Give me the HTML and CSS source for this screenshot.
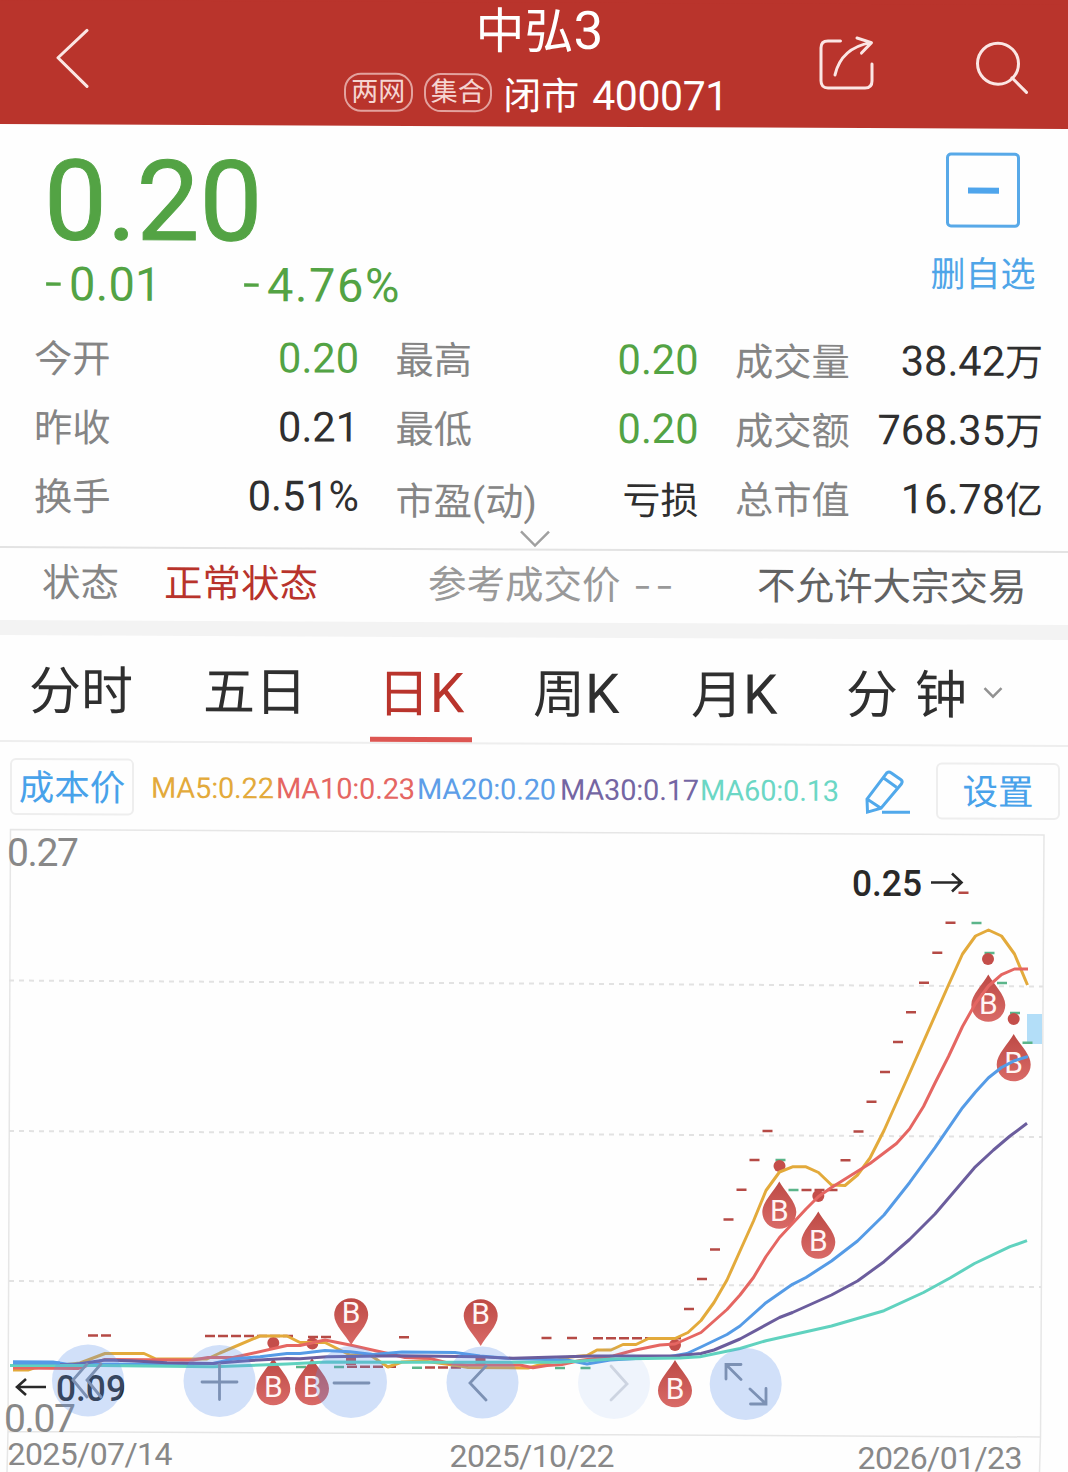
FILE: index.html
```html
<!DOCTYPE html>
<html lang="zh-CN">
<head>
<meta charset="utf-8">
<title>中弘3 400071</title>
<link rel="stylesheet" href="styles.css">
</head>
<body>
<div class="panel">
  <header class="header">
    <svg class="icon-back" width="34" height="62" viewBox="55 28 34 62"><path d="M87 31 58 58.500 87 87"/></svg>
    <div class="heading">
      <h1 class="title">中弘<span class="num">3</span></h1>
      <div class="subtitle"><span class="badge">两网</span><span class="badge">集合</span><span class="market">闭市</span><span class="code">400071</span></div>
    </div>
    <svg class="icon-share" width="60" height="60" viewBox="816 34 60 60"><path d="M840.500 41H828Q821 41 821 48V81Q821 88 828 88H865Q872 88 872 81V64M835 75Q841 48 871 42.500M857 38 871.500 42.500 861.500 53"/></svg>
    <svg class="icon-search" width="60" height="60" viewBox="972 34 60 60"><circle cx="998" cy="61" r="20.500"/><path d="m1012 75 14.500 14.500"/></svg>
  </header>

  <section class="quote">
    <div class="prices">
      <div class="price">0.20</div>
      <div class="change"><span class="delta"><i>-</i>0.01</span><span class="percent"><i>-</i>4.76%</span></div>
    </div>
    <div class="watch">
      <div class="watch-box"><i></i></div>
      <span>删自选</span>
    </div>
  </section>

  <section class="stats">
    <dl><dt>今开</dt><dd class="down">0.20</dd></dl>
    <dl><dt>最高</dt><dd class="down">0.20</dd></dl>
    <dl><dt>成交量</dt><dd>38.42<em>万</em></dd></dl>
    <dl><dt>昨收</dt><dd>0.21</dd></dl>
    <dl><dt>最低</dt><dd class="down">0.20</dd></dl>
    <dl><dt>成交额</dt><dd>768.35<em>万</em></dd></dl>
    <dl><dt>换手</dt><dd>0.51%</dd></dl>
    <dl class="low"><dt>市盈<span class="num">(</span>动<span class="num">)</span></dt><dd><em>亏损</em></dd></dl>
    <dl><dt>总市值</dt><dd>16.78<em>亿</em></dd></dl>
  </section>
  <div class="more"><svg width="34" height="20" viewBox="0 0 34 20"><path d="M3 3 17 17 31 3"/></svg></div>

  <section class="status">
    <span class="s-label">状态</span><span class="s-value">正常状态</span><span class="s-ref">参考成交价</span><span class="s-dash">--</span><span class="s-block">不允许大宗交易</span>
  </section>

  <nav class="tabs">
    <span class="tab t1">分时</span><span class="tab t2">五日</span><span class="tab t3 active">日<b>K</b></span><span class="tab t4">周<b>K</b></span><span class="tab t5">月<b>K</b></span><span class="tab t6">分 钟</span>
    <svg class="tab-arrow" width="20" height="14" viewBox="0 0 20 14"><path d="m1.500 2.500 8.500 8.500 8.500-8.500"/></svg>
  </nav>

  <section class="legend">
    <span class="btn cost">成本价</span>
    <span class="ma m5">MA5:0.22</span><span class="ma m10">MA10:0.23</span><span class="ma m20">MA20:0.20</span><span class="ma m30">MA30:0.17</span><span class="ma m60">MA60:0.13</span>
    <svg class="icon-edit" width="48" height="48" viewBox="864 768 48 48"><path d="M867 799 887 772.500Q889 771 891 772.500L901 779.500Q903 781 901.500 783.500L881 808 867.500 812ZM867 799 881 808M884 778 896.500 787M882 812H910"/></svg>
    <span class="btn setup">设置</span>
  </section>
</div>

<svg class="chart" width="1068" height="650" viewBox="0 822 1068 650">
  <defs>
    <linearGradient id="drop" x1="0" y1="0" x2="0" y2="1"><stop offset="0" stop-color="#bd4a45"/><stop offset="1" stop-color="#d96a67"/></linearGradient>
    <g id="buy-up"><path d="M0 0C5 9.500 17 20 17 30.500A17 16.800 0 0 1-17 30.500C-17 20-5 9.500 0 0Z" fill="url(#drop)"/><text y="39" class="b">B</text></g>
    <g id="buy-down"><path d="M0 0C-5-9.500-17-20-17-30A17 16.800 0 0 1 17-30C17-20 5-9.500 0 0Z" fill="url(#drop)"/><text y="-22.500" class="b">B</text></g>
  </defs>

  <path class="frame" d="M7 1472 8 1431.500 10.500 829.500 1044 835 1040.500 1437 1039.500 1472M8 1431.500 1040.500 1437"/>
  <path class="grid" d="M9 980.500 1043 986.500M9 1131 1042 1137M9 1281 1041 1287"/>
  <rect x="1027" y="1014" width="15" height="30" fill="#b3def8"/>

  <path class="tick up" d="M88 1335.500h10m3 0h10M205 1336h10m3 0h10m3 0h10m3 0h10m3 0h10m3 0h10m3 0h10M308 1337h10m3 0h10M399 1337.300h10M541.500 1338h10M567 1338h10M593 1338.300h10m3 0h10m3 0h10m3 0h10m3 0h10m3 0h10m3 0h10M347 1366.700h10m3 0h10m3 0h10m3 0h10M425 1367.500h10m3 0h10m3 0h10M684 1309h10M697 1279h10M710 1249.500h10M723.500 1219.500h10M736.500 1189.700h10M749.500 1160h10M762.500 1131h10M801.500 1190h10m3 0h10m3 0h10M840.500 1160.300h10M853.500 1131.500h10M866.500 1101.700h10M880 1072h10M893 1042h10M906 1012.300h10M919 982.700h10M932.300 952.700h10M945.500 922.700h10M958.500 892.700h10"/>
  <path class="tick fall" d="M296 1367h10M334 1367h10M412 1367.700h10M555 1368h10M580.500 1368h10M775.500 1160h10M788.500 1190h10M971.500 923h10M984.500 953h10M997 983h10M1010 1013h10M1022.500 1042.700h10"/>

  <g class="dot"><circle cx="273.300" cy="1343" r="6"/><circle cx="312.300" cy="1343.500" r="6"/><circle cx="675" cy="1345" r="6"/><circle cx="779.500" cy="1166" r="6"/><circle cx="818.300" cy="1196" r="6"/><circle cx="988" cy="959" r="6"/><circle cx="1013.700" cy="1019" r="6"/><rect x="346" y="1356" width="10" height="9"/><rect x="475.500" y="1357" width="10" height="7"/></g>
  <use href="#buy-up" x="273.300" y="1358"/><use href="#buy-up" x="312" y="1358"/><use href="#buy-up" x="675" y="1360"/><use href="#buy-up" x="779.300" y="1181.500"/><use href="#buy-up" x="818.300" y="1211.500"/><use href="#buy-up" x="988.300" y="974.500"/><use href="#buy-up" x="1013.700" y="1034"/>
  <use href="#buy-down" x="351.200" y="1345"/><use href="#buy-down" x="480.700" y="1346"/>

  <g class="line">
    <polyline stroke="#e3aa3b" points="13,1370 28,1370 34,1368 80,1363 105,1353.500 144,1353.500 156,1359 207,1359 220,1353 260,1336 287,1336 300,1342.500 325,1342.500 350,1355 370,1355 388,1367 402,1362 424,1361 460,1366 468,1367.500 528,1368 541,1364.500 570,1357 587,1355.500 597,1350 611,1350 623,1344.500 636,1344.500 648.500,1338.500 675,1338.500 688,1332.500 701,1320.500 714,1302.500 727,1280 740,1251 753.500,1221 766,1190.500 779.500,1172 792.500,1166.800 806,1166.800 818.500,1172.500 831.500,1185 845,1185.500 857.500,1175 870,1158 884,1130.500 907,1079 948.500,985 962.500,954 975.500,936 988.500,930 1001.500,936 1014.500,954 1027.500,985"/>
    <polyline stroke="#e56662" points="13,1368 78,1368.500 105,1359.500 193,1360 208,1357.500 233,1357.500 247,1354.500 287,1345.500 300,1345.500 325,1340 350,1345 388,1353.500 405,1357.500 430,1358.500 450,1363.500 467,1365 520,1365 533,1367.700 547,1365.500 562,1364.500 580,1360.500 613,1356 633,1350.500 660,1345 675,1344 701,1332.500 727,1309.500 740,1295 753.500,1277.500 766,1256.500 779.500,1237.500 792.500,1223.500 806,1209 818.500,1196.500 831.500,1187.500 870,1163.500 896.500,1143.500 909.500,1129 923.500,1106.500 935,1083 948.500,1056.500 962.500,1026.500 975.500,1003.500 988.500,986 1001.500,974.700 1014.500,969 1028,969"/>
    <polyline stroke="#559be6" points="13,1361.700 53,1362 67,1364.300 100,1364.300 213,1363.500 233,1359 260,1356.700 287,1353.500 300,1353.500 325,1350.500 350,1351.700 373,1354.500 402,1352 455,1352.500 480,1356 513,1358.700 567,1360 587,1364 610,1360 670,1356.500 687,1353.500 701,1347 727,1334.500 740,1326 766,1302.700 792.500,1284.300 806,1277.500 831.500,1261 857.500,1241 884,1215 909.500,1182.700 935,1147.700 962.500,1107.700 975.500,1092 988.500,1077.700 1001.500,1067.500 1014.500,1060.700 1028,1056.500"/>
    <polyline stroke="#6b5d9d" points="40,1364.500 73,1364.700 105,1360 130,1360.700 167,1362.700 213,1363.500 247,1360.700 287,1358.500 300,1358.700 327,1356.700 400,1355.700 480,1356.700 513,1358.300 547,1357.300 593,1356 675,1356 701,1353.500 714,1350 740,1339 779.500,1317.500 792.500,1312.500 831.500,1295 857.500,1281 884,1261.700 909.500,1239.500 935,1214 974.500,1167.700 993.500,1150 1010,1136 1027,1123.300"/>
    <polyline stroke="#60d2bf" points="10,1365.500 100,1365.500 213,1366.700 287,1364 327,1362 400,1362.300 560,1362.300 613,1359 680,1358 700,1356.700 740,1348.500 766,1340.700 831.500,1326 884,1310.700 923.500,1292.500 950,1278 974.500,1263.500 1010,1246.700 1027,1240.700"/>
    <path stroke="#559be6" d="M13 1363H60"/>
  </g>

  <g class="mark">
    <text x="852" y="895.500" textLength="70" lengthAdjust="spacingAndGlyphs">0.25</text>
    <path d="M931 882.500H961M952 873.500 961.500 882.500 952 891.500"/>
    <text x="56" y="1401" textLength="70" lengthAdjust="spacingAndGlyphs">0.09</text>
    <path d="M46 1387H17M26 1379 17 1387 26 1395"/>
  </g>
  <g class="axis">
    <text x="7" y="866" class="scale" textLength="72">0.27</text>
    <text x="4" y="1432" class="scale" textLength="72">0.07</text>
    <text x="7.500" y="1464.500" textLength="165">2025/07/14</text>
    <text x="449.500" y="1466.500" textLength="165">2025/10/22</text>
    <text x="857.500" y="1469" textLength="165">2026/01/23</text>
  </g>

  <g class="control">
    <circle cx="88" cy="1380.500" r="36"/><circle cx="219.500" cy="1381" r="36"/><circle cx="351" cy="1382" r="36"/><circle cx="482.500" cy="1382.500" r="36"/><circle cx="614" cy="1383" r="36" class="faint"/><circle cx="745.700" cy="1384" r="36"/>
    <path d="M87 1364 73 1380 87 1397M101 1364 87 1380 101 1397M202 1382H237M219.500 1364.500V1399.500M334 1383H369M486 1366 470 1383 486 1400"/>
    <path class="off" d="M611 1366 627 1384 611 1400"/>
    <path d="M726 1379V1364.500H741M727 1365.500 741 1379.500M766 1388.500V1404H750.500M750 1389 765 1403"/>
  </g>
</svg>
</body>
</html>
```
FILE: styles.css
```css
* { box-sizing: border-box; }
body {
  margin: 0;
  width: 1068px;
  height: 1472px;
  overflow: hidden;
  background: #fefefe;
  color: #2f2f2f;
  font-family: Roboto, "Noto Sans CJK SC", sans-serif;
}
svg { display: block; fill: none; flex: none; }
/* the whole quote panel leans slightly down to the right */
.panel {
  height: 822px;
  transform: skewY(0.27deg);
  transform-origin: 0 0;
}
.num, b { font-weight: 400; }

.header {
  display: flex;
  height: 124px;
  background: #b9342c;
  box-shadow: 0 -10px 0 #b9342c;
  color: #fff;
  stroke: #fbe6e4;
  stroke-width: 3;
  stroke-linecap: round;
  stroke-linejoin: round;
}
.icon-back { margin: 27px 0 0 55px; }
.heading { width: 384px; margin-left: 255px; stroke: none; }
.title {
  margin: 0;
  padding-left: 7px;
  height: 60px;
  line-height: 56px;
  font-size: 49px;
  font-weight: 400;
  text-align: center;
}
.title .num { font-size: 53px; }
.subtitle { display: flex; align-items: center; height: 64px; white-space: nowrap; }
.badge {
  width: 69px;
  height: 39px;
  margin: -4px 11px 0 0;
  border: 2px solid #e3a29e;
  border-radius: 17px;
  color: #f5d5d2;
  font-size: 27px;
  line-height: 34px;
  text-align: center;
}
.market { margin-top: 4px; font-size: 38px; line-height: 60px; }
.code { margin: 2px 0 0 13px; font-size: 41px; line-height: 60px; letter-spacing: -0.4px; }
.icon-share { margin: 30px 0 0 88px; }
.icon-search { margin: 32px 0 0 96px; }

.quote { display: flex; justify-content: space-between; height: 198px; color: #53a344; }
.prices { padding: 20px 0 0 44px; }
.price { height: 112px; font-size: 112px; line-height: 114px; -webkit-text-stroke: 1px; }
.change { display: flex; height: 56px; font-size: 47px; line-height: 56px; }
.change i { display: inline-block; width: 24px; font-style: normal; line-height: 40px; transform: translateY(-2px) scaleX(1.3); transform-origin: 0 50%; }
.delta { width: 199px; padding-left: 1px; letter-spacing: 0.3px; }
.percent { letter-spacing: 1.6px; }
.watch { display: flex; flex-direction: column; align-items: center; width: 110px; margin-right: 30px; padding-top: 24px; color: #4fa5e8; font-size: 35px; }
.watch-box { display: flex; align-items: center; justify-content: center; width: 74px; height: 75px; border: 3px solid #58a9e8; border-radius: 5px; }
.watch-box i { width: 31px; height: 6px; background: #4fa5ec; }
.watch span { margin-top: 26px; line-height: 44px; white-space: nowrap; }

.stats { display: grid; grid-template-columns: 324px 302px 307px; grid-template-rows: repeat(3, 69px); column-gap: 37.500px; padding-left: 34px; height: 208px; }
.stats dl { display: flex; justify-content: space-between; margin: 0; height: 69px; line-height: 69px; white-space: nowrap; }
.stats dt { padding-top: 2px; color: #858585; font-size: 38.300px; }
.stats dd { margin: 0 -1px 0 0; font-size: 41.500px; }
.stats em { font-style: normal; font-size: 38px; }
.stats .down { color: #53a344; }
.stats .low { padding-top: 3px; }
.stats .low dd { line-height: 67px; }
.more { display: flex; justify-content: center; height: 18px; border-bottom: 2px solid #e3e3e3; stroke: #a0a0a0; stroke-width: 2.500; }
.more svg { margin-top: -4px; margin-left: 2px; overflow: visible; }

.status { display: flex; height: 72px; padding-left: 42px; line-height: 70px; font-size: 38.500px; white-space: nowrap; color: #858585; }
.s-label { width: 122px; }
.s-value { width: 264px; color: #b8332b; }
.s-ref { width: 207px; color: #999; }
.s-dash { width: 122px; color: #999; letter-spacing: 5px; transform: scaleX(1.400); transform-origin: 0 50%; }
.s-block { color: #626262; }

.tabs { display: flex; height: 122px; border-top: 15px solid #f3f3f3; border-bottom: 2px solid #eee; font-size: 52px; line-height: 113px; white-space: nowrap; }
.tab { height: 105px; }
.tab b { font-size: 55px; }
.t1 { margin-left: 29px; width: 174px; }
.t2 { width: 167px; }
.t3 { width: 102px; text-align: center; }
.active { color: #b9342c; border-bottom: 5px solid #dd5652; }
.t4 { margin-left: 61px; width: 158px; }
.t5 { width: 155px; }
.t6 { width: 137px; word-spacing: 4px; }
.tab-arrow { margin-top: 46px; stroke: #929292; stroke-width: 2.500; }

.legend { display: flex; align-items: center; height: 88px; padding-left: 10px; white-space: nowrap; }
.btn { height: 57px; border: 2px solid #eee; border-radius: 6px; color: #48a2ea; font-size: 35.500px; line-height: 57px; text-align: center; }
.cost { width: 124px; margin-right: 17px; }
.setup { width: 124px; }
.ma { font-size: 29px; line-height: 40px; padding-top: 2px; letter-spacing: -0.2px; }
.m5 { width: 125px; color: #e3aa3b; }
.m10 { width: 141px; color: #e56662; }
.m20 { width: 143px; color: #5d9ee8; }
.m30 { width: 140px; color: #7466a3; }
.m60 { width: 164px; color: #6bd7c5; }
.icon-edit { margin: 4px 24px 0 0; stroke: #51a9eb; stroke-width: 3; }

.chart { font-family: Roboto, sans-serif; }
.frame { stroke: #e6e6e6; stroke-width: 1.500; }
.grid { stroke: #e2e2e2; stroke-width: 2; stroke-dasharray: 5 5; }
.tick { stroke-width: 2.600; }
.up { stroke: #b54a45; }
.fall { stroke: #5bb58a; }
.dot { fill: #c44e4a; }
.b { fill: #fff5f4; font-size: 30px; text-anchor: middle; }
.line { stroke-width: 3; stroke-linejoin: round; }
.mark { fill: #292929; stroke: none; font-size: 37px; font-weight: 500; }
.mark path { fill: none; stroke: #292929; stroke-width: 2.600; }
.axis { fill: #888; font-size: 32px; }
.scale { font-size: 39px; }
.control { stroke: #7c91b4; stroke-width: 2.800; stroke-linecap: round; }
.control circle { fill: #5c94ec; fill-opacity: 0.28; stroke: none; }
.control .faint { fill-opacity: 0.09; }
.control .off { stroke: #cdd4e1; }
```
